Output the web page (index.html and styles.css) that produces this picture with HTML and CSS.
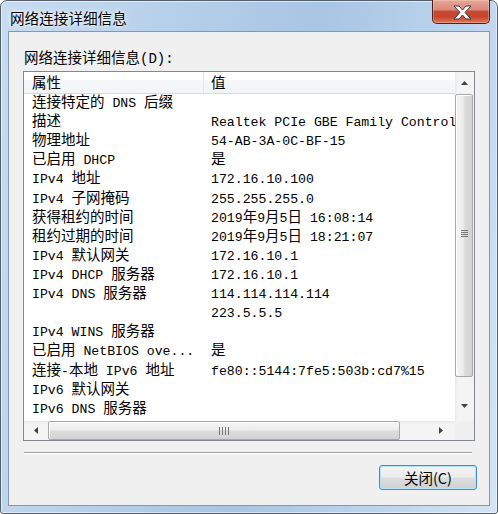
FILE: index.html
```html
<!DOCTYPE html>
<html lang="zh-CN">
<head>
    <meta charset="UTF-8">
    <title>网络连接详细信息</title>
    <link rel="stylesheet" href="styles.css">
</head>
<body>
    <div class="window">
        <div class="titlebar">
            <span class="title">网络连接详细信息</span>
            <div class="close-btn">
                <svg width="58" height="23" viewBox="0 0 58 23">
                    <polygon points="21,6 26,6 29.5,10 33,6 38,6 32,12.5 38,19 33,19 29.5,15 26,19 21,19 27,12.5" fill="#fff" stroke="#3b3b3b" stroke-width="1" stroke-linejoin="round"/>
                </svg>
            </div>
        </div>

        <div class="client">
            <div class="label">网络连接详细信息<span class="en">(D):</span></div>

            <div class="listbox">
                <div class="list">
                    <div class="list-head">
                        <div class="col-a">属性</div>
                        <div class="col-b">值</div>
                    </div>
                    <div class="row"><div class="col-a">连接特定的<span class="en"> DNS </span>后缀</div><div class="col-b"></div></div>
                    <div class="row"><div class="col-a">描述</div><div class="col-b"><span class="en">Realtek PCIe GBE Family Controller</span></div></div>
                    <div class="row"><div class="col-a">物理地址</div><div class="col-b"><span class="en">54-AB-3A-0C-BF-15</span></div></div>
                    <div class="row"><div class="col-a">已启用<span class="en"> DHCP</span></div><div class="col-b">是</div></div>
                    <div class="row"><div class="col-a"><span class="en">IPv4 </span>地址</div><div class="col-b"><span class="en">172.16.10.100</span></div></div>
                    <div class="row"><div class="col-a"><span class="en">IPv4 </span>子网掩码</div><div class="col-b"><span class="en">255.255.255.0</span></div></div>
                    <div class="row"><div class="col-a">获得租约的时间</div><div class="col-b"><span class="en">2019</span>年<span class="en">9</span>月<span class="en">5</span>日<span class="en"> 16:08:14</span></div></div>
                    <div class="row"><div class="col-a">租约过期的时间</div><div class="col-b"><span class="en">2019</span>年<span class="en">9</span>月<span class="en">5</span>日<span class="en"> 18:21:07</span></div></div>
                    <div class="row"><div class="col-a"><span class="en">IPv4 </span>默认网关</div><div class="col-b"><span class="en">172.16.10.1</span></div></div>
                    <div class="row"><div class="col-a"><span class="en">IPv4 DHCP </span>服务器</div><div class="col-b"><span class="en">172.16.10.1</span></div></div>
                    <div class="row"><div class="col-a"><span class="en">IPv4 DNS </span>服务器</div><div class="col-b"><span class="en">114.114.114.114</span></div></div>
                    <div class="row"><div class="col-a"></div><div class="col-b"><span class="en">223.5.5.5</span></div></div>
                    <div class="row"><div class="col-a"><span class="en">IPv4 WINS </span>服务器</div><div class="col-b"></div></div>
                    <div class="row"><div class="col-a">已启用<span class="en"> NetBIOS ove...</span></div><div class="col-b">是</div></div>
                    <div class="row"><div class="col-a">连接<span class="en">-</span>本地<span class="en"> IPv6 </span>地址</div><div class="col-b"><span class="en">fe80::5144:7fe5:503b:cd7%15</span></div></div>
                    <div class="row"><div class="col-a"><span class="en">IPv6 </span>默认网关</div><div class="col-b"></div></div>
                    <div class="row"><div class="col-a"><span class="en">IPv6 DNS </span>服务器</div><div class="col-b"></div></div>
                </div>

                <!-- vertical scrollbar -->
                <div class="vscroll">
                    <div class="sb-btn up">
                        <svg width="7" height="4" viewBox="0 0 7 4"><polygon points="0,4 3.5,0 7,4" fill="#404040"/></svg>
                    </div>
                    <div class="thumb-v">
                        <svg width="7" height="8" viewBox="0 0 7 8">
                            <rect x="0" y="0" width="7" height="1" fill="#777"/>
                            <rect x="0" y="2" width="7" height="1" fill="#777"/>
                            <rect x="0" y="4" width="7" height="1" fill="#777"/>
                            <rect x="0" y="6" width="7" height="1" fill="#777"/>
                        </svg>
                    </div>
                    <div class="track-v"></div>
                    <div class="sb-btn down">
                        <svg width="7" height="4" viewBox="0 0 7 4"><polygon points="0,0 7,0 3.5,4" fill="#404040"/></svg>
                    </div>
                </div>

                <!-- horizontal scrollbar -->
                <div class="hscroll">
                    <div class="sb-btn left">
                        <svg width="4" height="7" viewBox="0 0 4 7"><polygon points="4,0 4,7 0,3.5" fill="#404040"/></svg>
                    </div>
                    <div class="thumb-h">
                        <svg width="10" height="8" viewBox="0 0 10 8">
                            <rect x="0" y="0" width="1" height="8" fill="#777"/>
                            <rect x="3" y="0" width="1" height="8" fill="#777"/>
                            <rect x="6" y="0" width="1" height="8" fill="#777"/>
                            <rect x="9" y="0" width="1" height="8" fill="#777"/>
                        </svg>
                    </div>
                    <div class="track-h"></div>
                    <div class="sb-btn right">
                        <svg width="4" height="7" viewBox="0 0 4 7"><polygon points="0,0 4,3.5 0,7" fill="#404040"/></svg>
                    </div>
                </div>
                <div class="corner"></div>
            </div>

            <div class="separator"></div>

            <div class="actions">
                <button class="btn-close">关闭(C)</button>
            </div>
        </div>
    </div>
</body>
</html>
```

FILE: styles.css
```css
body {
    margin: 0;
    background: #fff;
    font-family: "Noto Sans CJK SC", sans-serif;
    color: #000;
}

/* Window frame */
.window {
    width: 498px;
    height: 514px;
    box-sizing: border-box;
    border: 1px solid #56606c;
    border-radius: 7px 7px 3px 3px;
    padding: 0 7px 7px;
    display: flex;
    flex-direction: column;
    background: linear-gradient(100deg, #c8dcf0 0%, #b6cfea 30%, #a8c5e4 55%, #bdd4ed 80%, #d4e5f5 100%);
    box-shadow: inset 0 0 0 1px rgba(255, 255, 255, 0.55);
}

.titlebar {
    position: relative;
    height: 30px;
    display: flex;
    align-items: center;
    padding-top: 3px;
    box-sizing: border-box;
}

.title {
    margin-left: 2px;
    font-size: 14.6px;
    text-shadow: 0 0 6px rgba(255, 255, 255, 0.95), 0 0 3px rgba(255, 255, 255, 0.9);
}

.close-btn {
    position: absolute;
    top: -1px;
    right: 0;
    width: 58px;
    height: 24px;
    box-sizing: border-box;
    border: 1px solid #4a2219;
    border-top: none;
    border-radius: 0 0 5px 5px;
    background: linear-gradient(#e7a898 0%, #d8897a 42%, #c34a33 50%, #c6442b 72%, #e0765a 100%);
    box-shadow: inset 0 0 0 1px rgba(255, 220, 210, 0.35);
}

.close-btn svg {
    display: block;
}

/* Client area */
.client {
    flex: 1;
    background: #f0f0f0;
    border: 1px solid #8597ac;
    display: flex;
    flex-direction: column;
    padding: 0 14px;
}

.label {
    margin-top: 16px;
    padding-left: 1px;
    font-size: 14.5px;
    line-height: 18px;
    white-space: nowrap;
}

.label .en {
    font-size: 14px;
}

.en {
    font-family: "Liberation Mono", monospace;
    font-size: 13.2px;
}

/* List view */
.listbox {
    margin-top: 3px;
    height: 370px;
    box-sizing: border-box;
    border: 1px solid #828790;
    background: #fff;
    display: grid;
    grid-template-columns: 1fr 19px;
    grid-template-rows: 1fr 19px;
}

.list {
    min-width: 0;
    overflow: hidden;
    font-size: 14.5px;
}

.list-head {
    height: 22px;
    box-sizing: border-box;
    display: flex;
    align-items: stretch;
    background: linear-gradient(#ffffff 0%, #ffffff 38%, #f6f7f9 40%, #f3f4f6 100%);
    border-bottom: 1px solid #d6d9dd;
    line-height: 20px;
}

.list-head .col-a {
    border-right: 1px solid #e3e5e8;
}

.col-a {
    width: 180px;
    flex: none;
    box-sizing: border-box;
    padding-left: 8px;
    white-space: nowrap;
}

.col-b {
    padding-left: 7px;
    white-space: nowrap;
}

.row {
    display: flex;
    height: 19.12px;
    line-height: 13px;
}

/* Scrollbars */
.vscroll {
    display: flex;
    flex-direction: column;
    background: linear-gradient(to right, #e8e8e8 0%, #f4f4f4 15%, #f4f4f4 100%);
}

.sb-btn {
    display: flex;
    align-items: center;
    justify-content: center;
    flex: none;
}

.sb-btn svg {
    display: block;
}

.sb-btn.up {
    height: 22px;
}

.sb-btn.down {
    height: 22px;
    padding-bottom: 8px;
    box-sizing: border-box;
}

.thumb-v {
    height: 283px;
    flex: none;
    margin-right: 1px;
    box-sizing: border-box;
    border: 1px solid #a8a8a8;
    border-radius: 2px;
    background: linear-gradient(to right, #f6f6f6 0%, #ececec 45%, #dcdcdc 55%, #d2d2d2 100%);
    box-shadow: inset 1px 1px 0 #fff;
    display: flex;
    align-items: center;
    justify-content: center;
    padding-bottom: 3px;
}

.track-v {
    flex: 1;
}

.hscroll {
    display: flex;
    background: linear-gradient(#e8e8e8 0%, #f4f4f4 15%, #f4f4f4 100%);
}

.sb-btn.left {
    width: 24px;
}

.sb-btn.right {
    width: 24px;
    padding-right: 4px;
    box-sizing: border-box;
}

.thumb-h {
    width: 352px;
    flex: none;
    box-sizing: border-box;
    border: 1px solid #a8a8a8;
    border-radius: 2px;
    background: linear-gradient(#f6f6f6 0%, #ececec 45%, #dcdcdc 55%, #d2d2d2 100%);
    box-shadow: inset 1px 1px 0 #fff;
    display: flex;
    align-items: center;
    justify-content: center;
}

.track-h {
    flex: 1;
}

.corner {
    background: #f0f0f0;
}

/* Bottom */
.separator {
    margin: 11px 3px 0 1px;
    border-top: 1px solid #a0a0a0;
    border-bottom: 1px solid #ffffff;
}

.actions {
    display: flex;
    justify-content: flex-end;
    margin-top: 11px;
    margin-right: -2px;
}

.btn-close {
    width: 98px;
    height: 25px;
    padding: 0;
    border: 1px solid #3d8ed0;
    border-radius: 3px;
    background: linear-gradient(#f4f4f4 0%, #ececec 48%, #dedede 52%, #d0d0d0 100%);
    box-shadow: inset 0 0 0 1px #b3e4fb;
    font-family: "Noto Sans CJK SC", sans-serif;
    font-size: 14.5px;
    line-height: 21px;
    color: #000;
}
```
